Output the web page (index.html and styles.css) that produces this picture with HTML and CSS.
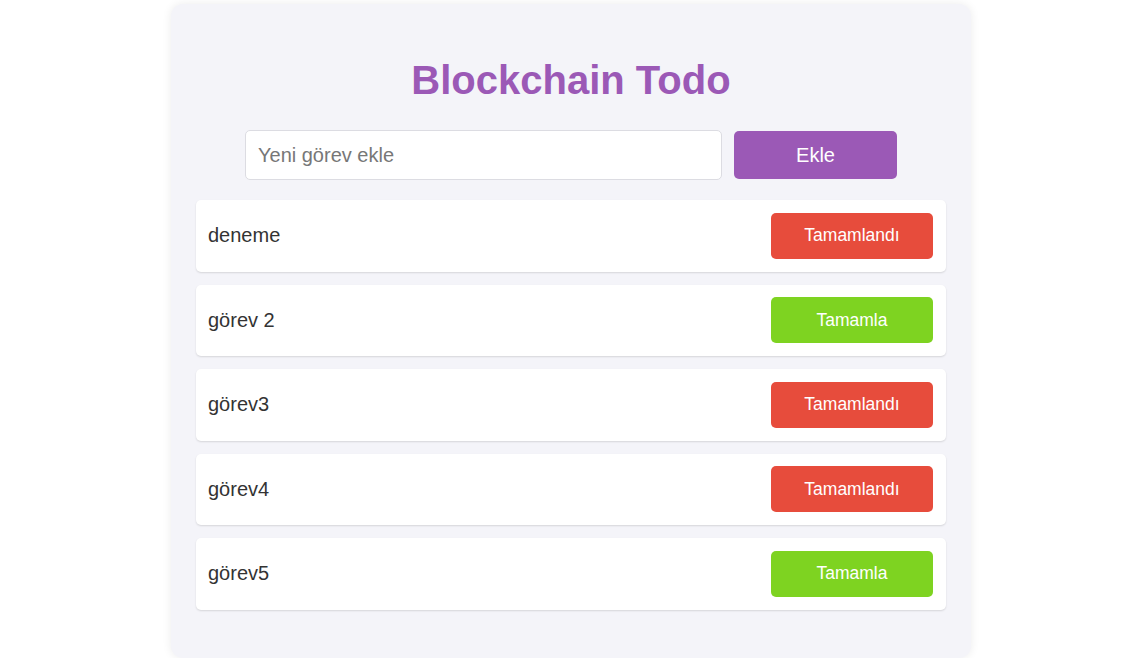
FILE: index.html
```html
<!DOCTYPE html>
<html lang="tr">
<head>
<meta charset="utf-8">
<title>Blockchain Todo</title>
<link rel="stylesheet" href="styles.css">
</head>
<body>
<div class="container">
  <h1 class="title">Blockchain Todo</h1>
  <div class="add-row">
    <input class="task-input" type="text" placeholder="Yeni görev ekle">
    <button class="add-btn">Ekle</button>
  </div>
  <ul class="task-list">
    <li class="task"><span class="task-text">deneme</span><button class="task-btn done">Tamamlandı</button></li>
    <li class="task"><span class="task-text">görev 2</span><button class="task-btn todo">Tamamla</button></li>
    <li class="task"><span class="task-text">görev3</span><button class="task-btn done">Tamamlandı</button></li>
    <li class="task"><span class="task-text">görev4</span><button class="task-btn done">Tamamlandı</button></li>
    <li class="task"><span class="task-text">görev5</span><button class="task-btn todo">Tamamla</button></li>
  </ul>
</div>
</body>
</html>
```
FILE: styles.css
```css
html, body {
  margin: 0;
  background: #ffffff;
  font-family: "Liberation Sans", Arial, sans-serif;
}
body {
  padding: 4px 0 0 6px;
}
.container {
  width: 800px;
  box-sizing: border-box;
  margin: 0 auto;
  padding: 26px 25px 48px;
  background: #f4f4f9;
  border-radius: 12px;
  box-shadow: 0 0 10px rgba(0, 0, 0, 0.08);
}
.title {
  margin: 27px 0 27px;
  text-align: center;
  color: #9b59b6;
  font-size: 40px;
  font-weight: bold;
  line-height: 46px;
}
.add-row {
  display: flex;
  justify-content: center;
  align-items: center;
  gap: 12px;
  margin-bottom: 20px;
}
.task-input {
  width: 477px;
  height: 50px;
  box-sizing: border-box;
  padding: 0 12px;
  border: 1px solid #dcdce2;
  border-radius: 5px;
  background: #fff;
  font-family: inherit;
  font-size: 20px;
  color: #333;
  outline: none;
}
.task-input::placeholder {
  color: #777;
}
.add-btn {
  width: 163px;
  height: 48px;
  border: none;
  border-radius: 5px;
  background: #9b59b6;
  color: #fff;
  font-family: inherit;
  font-size: 20px;
  cursor: pointer;
}
.task-list {
  list-style: none;
  margin: 0;
  padding: 0;
  display: flex;
  flex-direction: column;
  gap: 13px;
}
.task {
  display: flex;
  justify-content: space-between;
  align-items: center;
  height: 71.5px;
  box-sizing: border-box;
  padding: 0 13px 0 12px;
  background: #fff;
  border-radius: 5px;
  box-shadow: 0 1px 2px rgba(0, 0, 0, 0.13);
}
.task-text {
  font-size: 20px;
  color: #333;
}
.task-btn {
  width: 162px;
  height: 46px;
  border: none;
  border-radius: 5px;
  color: #fff;
  font-family: inherit;
  font-size: 17.5px;
  cursor: pointer;
}
.task-btn.done {
  background: #e74c3c;
}
.task-btn.todo {
  background: #7ed321;
}
```
